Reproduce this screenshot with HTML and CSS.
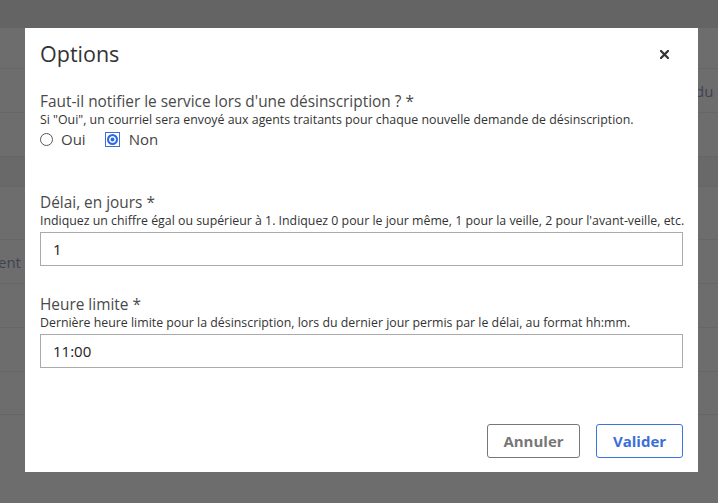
FILE: index.html
```html
<!DOCTYPE html>
<html lang="fr">
<head>
<meta charset="utf-8">
<title>Options</title>
<link rel="stylesheet" href="styles.css">
</head>
<body>
<div class="page">
  <div class="topbar"></div>
  <div class="row r1"></div>
  <div class="row r2"><span class="frag-right">du r</span></div>
  <div class="row r3"></div>
  <div class="row band"></div>
  <div class="row r4"></div>
  <div class="row r5"><span class="frag-left">ent</span></div>
  <div class="row r6"></div>
  <div class="row r7"></div>
  <div class="row r8"></div>
  <div class="row r9"><span class="cell-aucun">Aucun</span></div>
</div>

<div class="modal">
  <div class="modal-header">
    <h1 class="modal-title">Options</h1>
    <button class="close" aria-label="Fermer">
      <svg width="9" height="9" viewBox="0 0 9 9"><path d="M1 1 L8 8 M8 1 L1 8" stroke="#333" stroke-width="2.2" stroke-linecap="square"/></svg>
    </button>
  </div>
  <div class="modal-body">
    <div class="group g1">
      <div class="label">Faut-il notifier le service lors d'une désinscription ? *</div>
      <div class="help">Si "Oui", un courriel sera envoyé aux agents traitants pour chaque nouvelle demande de désinscription.</div>
      <div class="radios">
        <label class="radio"><span class="dot"></span><span class="rtext">Oui</span></label>
        <label class="radio checked"><span class="focus"><span class="dot"></span></span><span class="rtext">Non</span></label>
      </div>
    </div>
    <div class="group g2">
      <div class="label">Délai, en jours *</div>
      <div class="help">Indiquez un chiffre égal ou supérieur à 1. Indiquez 0 pour le jour même, 1 pour la veille, 2 pour l'avant-veille, etc.</div>
      <div class="input">1</div>
    </div>
    <div class="group g3">
      <div class="label">Heure limite *</div>
      <div class="help">Dernière heure limite pour la désinscription, lors du dernier jour permis par le délai, au format hh:mm.</div>
      <div class="input">11:00</div>
    </div>
  </div>
  <div class="modal-footer">
    <button class="btn btn-cancel">Annuler</button>
    <button class="btn btn-ok">Valider</button>
  </div>
</div>
</body>
</html>
```
FILE: styles.css
```css
* { box-sizing: border-box; }
html, body { margin: 0; padding: 0; }
body {
  width: 718px;
  height: 503px;
  overflow: hidden;
  font-family: "Open Sans", "DejaVu Sans", sans-serif;
  background: #6d6d6d;
  position: relative;
}
.page { width: 718px; }
.topbar { height: 28px; background: #646464; }
.row {
  border-bottom: 1px solid #666666;
  color: #3e4450;
  font-size: 15px;
  white-space: nowrap;
  overflow: hidden;
  display: flex;
  align-items: center;
}
.r1 { height: 41px; }
.r2 { height: 44px; }
.r3 { height: 44px; }
.band { height: 30px; background: #696969; }
.r4 { height: 53px; }
.r5 { height: 44px; }
.r6 { height: 44px; }
.r7 { height: 44px; }
.r8 { height: 43px; }
.r9 { height: 45px; border-bottom: none; align-items: stretch; }
.frag-right { padding-left: 695px; }
.frag-left { width: 22px; display: block; margin-left: -2px; }
.cell-aucun {
  width: 316px;
  border-right: 1px solid #666;
  text-align: right;
  padding: 13px 9px 0 0;
  font-size: 14px;
  color: #3f4654;
}

.modal {
  position: absolute;
  left: 25px;
  top: 28px;
  width: 673px;
  height: 444px;
  background: #fff;
  color: #333;
}
.modal-header {
  display: flex;
  justify-content: space-between;
  align-items: center;
  padding: 11px 29px 0 15px;
  height: 41px;
}
.modal-title {
  margin: 0;
  font-weight: 400;
  font-size: 21.5px;
  line-height: 30px;
  color: #333;
}
.close {
  border: none;
  background: none;
  padding: 0;
  width: 9px;
  height: 9px;
  display: block;
  margin-top: 1px;
}
.close svg { display: block; }
.modal-body { padding: 0 15px; }
.group.g1 { margin-top: 23px; }
.group.g2 { margin-top: 43px; }
.group.g3 { margin-top: 29px; }
.label {
  font-size: 15.4px;
  line-height: 20px;
  color: #4a4a4a;
}
.help {
  font-size: 12.35px;
  line-height: 16px;
  color: #333;
  white-space: nowrap;
}
.g1 .help { margin-top: 0; }
.radios {
  display: flex;
  align-items: center;
  gap: 19px;
  height: 22px;
  margin-top: 0;
}
.radio {
  display: flex;
  align-items: center;
  font-size: 15px;
  color: #444;
}
.radio .dot {
  width: 13px;
  height: 13px;
  border: 1px solid #555;
  border-radius: 50%;
  background: #fff;
  display: block;
}
.radio .rtext { margin-left: 8px; }
.radio.checked .focus {
  width: 15px;
  height: 15px;
  border: 1.5px solid #3b6fe0;
  display: flex;
  align-items: center;
  justify-content: center;
}
.radio.checked .dot {
  width: 11px;
  height: 11px;
  border: 2px solid #2d68e0;
  background: #2d68e0;
  box-shadow: inset 0 0 0 1.5px #fff;
}
.radio.checked .rtext { margin-left: 9px; }
.input {
  margin-top: 3px;
  height: 34px;
  border: 1px solid #aaa;
  padding: 0 12px;
  display: flex;
  align-items: center;
  font-size: 15px;
  color: #222;
}
.modal-footer {
  display: flex;
  justify-content: flex-end;
  gap: 16px;
  padding: 56px 15px 0 15px;
}
.btn {
  height: 34px;
  border-radius: 3px;
  background: #fff;
  font-family: "Open Sans", "DejaVu Sans", sans-serif;
  font-weight: 700;
  font-size: 15px;
  padding: 0;
}
.btn-cancel { width: 93px; border: 1px solid #777; color: #777; }
.btn-ok { width: 87px; border: 1px solid #3b73e0; color: #3a6fd8; }
```
